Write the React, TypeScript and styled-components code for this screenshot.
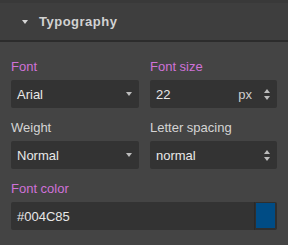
import React from "react";
import styled, { createGlobalStyle } from "styled-components";

const GlobalStyle = createGlobalStyle`
  html, body {
    margin: 0;
    padding: 0;
    background: #444444;
  }
  body {
    font-family: "Liberation Sans", Arial, sans-serif;
  }
`;

const Panel = styled.div`
  width: 288px;
  height: 245px;
  background: #444444;
  overflow: hidden;
`;

const Header = styled.div`
  height: 37px;
  border-top: 3px solid #393939;
  border-bottom: 2px solid #2c2c2c;
  background: #3e3e3e;
  display: flex;
  align-items: center;
  padding-left: 22px;
  gap: 11px;
`;

const Caret = styled.span`
  width: 0;
  height: 0;
  border-left: 3.5px solid transparent;
  border-right: 3.5px solid transparent;
  border-top: 4px solid #d6d6d6;
  margin-top: 1px;
`;

const Title = styled.span`
  color: #d2d2d2;
  font-size: 13px;
  font-weight: bold;
  letter-spacing: 0.5px;
`;

const Body = styled.div`
  display: grid;
  grid-template-columns: 128px 127px;
  column-gap: 11px;
  row-gap: 12px;
  padding: 17px 11px 0 11px;
`;

const Field = styled.div<{ $wide?: boolean }>`
  display: flex;
  flex-direction: column;
  gap: 6px;
  grid-column: ${(p) => (p.$wide ? "1 / -1" : "auto")};
`;

const Label = styled.div<{ $set?: boolean }>`
  font-size: 13px;
  line-height: 15px;
  color: ${(p) => (p.$set ? "#cf72d8" : "#d4d4d4")};
`;

const Box = styled.div`
  height: 28px;
  box-sizing: border-box;
  background: #333333;
  border-radius: 2px;
  display: flex;
  align-items: center;
  padding: 0 7px 0 6px;
  color: #e8e8e8;
  font-size: 13px;
`;

const Value = styled.span`
  flex: 1;
`;

const Unit = styled.span`
  color: #cfcfcf;
  font-size: 13px;
  margin-right: 12px;
`;

const DownArrow = styled.span`
  width: 0;
  height: 0;
  border-left: 3.5px solid transparent;
  border-right: 3.5px solid transparent;
  border-top: 4px solid #bdbdbd;
`;

const Spinner = styled.span`
  display: flex;
  flex-direction: column;
  gap: 3px;
  &::before,
  &::after {
    content: "";
    width: 0;
    height: 0;
    border-left: 3.5px solid transparent;
    border-right: 3.5px solid transparent;
  }
  &::before {
    border-bottom: 4px solid #bdbdbd;
  }
  &::after {
    border-top: 4px solid #bdbdbd;
  }
`;

const ColorRow = styled.div`
  height: 28px;
  display: flex;
  border-radius: 2px;
  overflow: hidden;
`;

const ColorText = styled.div`
  flex: 1;
  background: #333333;
  display: flex;
  align-items: center;
  padding-left: 6px;
  color: #e8e8e8;
  font-size: 13px;
`;

const SwatchWell = styled.div`
  width: 23px;
  box-sizing: border-box;
  border-left: 1px solid #292929;
  background: #2f2f2f;
  padding: 1px 2px 2px 1px;
  display: flex;
`;

const Swatch = styled.div<{ $color: string }>`
  flex: 1;
  background: ${(p) => p.$color};
`;

export default function App() {
  return (
    <>
      <GlobalStyle />
      <Panel>
        <Header>
          <Caret />
          <Title>Typography</Title>
        </Header>
        <Body>
          <Field>
            <Label $set>Font</Label>
            <Box>
              <Value>Arial</Value>
              <DownArrow />
            </Box>
          </Field>
          <Field>
            <Label $set>Font size</Label>
            <Box>
              <Value>22</Value>
              <Unit>px</Unit>
              <Spinner />
            </Box>
          </Field>
          <Field>
            <Label>Weight</Label>
            <Box>
              <Value>Normal</Value>
              <DownArrow />
            </Box>
          </Field>
          <Field>
            <Label>Letter spacing</Label>
            <Box>
              <Value>normal</Value>
              <Spinner />
            </Box>
          </Field>
          <Field $wide>
            <Label $set>Font color</Label>
            <ColorRow>
              <ColorText>#004C85</ColorText>
              <SwatchWell>
                <Swatch $color="#004C85" />
              </SwatchWell>
            </ColorRow>
          </Field>
        </Body>
      </Panel>
    </>
  );
}
